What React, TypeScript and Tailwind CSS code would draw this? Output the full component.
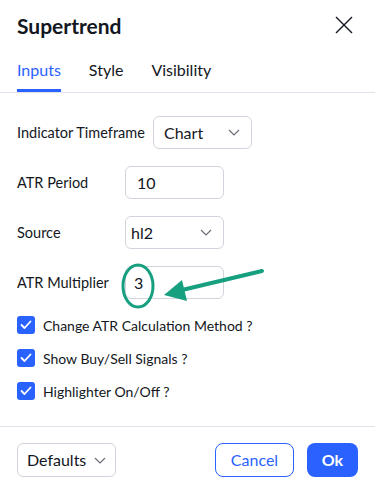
import React from "react";

const Chevron = () => (
  <svg width="12" height="7" viewBox="0 0 12 7" fill="none">
    <path d="M1 1l5 5 5-5" stroke="#6a6d78" strokeWidth="1.2" />
  </svg>
);

const Check = () => (
  <span className="w-[18px] h-[18px] rounded-[3px] bg-[#2962ff] flex items-center justify-center shrink-0">
    <svg width="12" height="10" viewBox="0 0 12 10" fill="none">
      <path d="M1.5 5l3 3 6-6.5" stroke="#fff" strokeWidth="1.8" strokeLinecap="round" strokeLinejoin="round" />
    </svg>
  </span>
);

export default function App() {
  return (
    <div
      className="relative w-[375px] h-[491px] bg-white text-[#131722] overflow-hidden flex flex-col"
      style={{ fontFamily: 'Lato, "Noto Sans", sans-serif' }}
    >
      <div className="h-[48px] flex items-center justify-between pl-[17px] pr-[22px] pt-[2px]">
        <span className="text-[21px] font-bold leading-none">Supertrend</span>
        <svg width="18" height="18" viewBox="0 0 18 18" fill="none">
          <path d="M1 1l16 16M17 1L1 17" stroke="#131722" strokeWidth="1.4" />
        </svg>
      </div>

      <div className="flex gap-[28px] px-[17px] border-b border-[#e0e3eb] h-[45px]">
        <div className="h-[44px] flex items-center border-b-[3px] border-[#2962ff] text-[#2962ff] text-[16px] pt-[3px]">Inputs</div>
        <div className="h-[44px] flex items-center border-b-[3px] border-transparent text-[16px] pt-[3px]">Style</div>
        <div className="h-[44px] flex items-center border-b-[3px] border-transparent text-[16px] pt-[3px]">Visibility</div>
      </div>

      <div className="flex flex-col px-[17px] pt-[23px] text-[14.5px]">
        <div className="flex items-center h-[33px]">
          <span className="w-[136px] shrink-0">Indicator Timeframe</span>
          <div className="w-[99px] h-[33px] border border-[#d1d4dc] rounded-[6px] flex items-center justify-between pl-[10px] pr-[11px] text-[16px]">
            <span>Chart</span>
            <Chevron />
          </div>
        </div>
        <div className="flex items-center h-[33px] mt-[17px]">
          <span className="w-[108px] shrink-0">ATR Period</span>
          <div className="w-[99px] h-[33px] border border-[#d1d4dc] rounded-[6px] flex items-center pl-[11px] text-[16px]">10</div>
        </div>
        <div className="flex items-center h-[33px] mt-[17px]">
          <span className="w-[108px] shrink-0">Source</span>
          <div className="w-[99px] h-[33px] border border-[#d1d4dc] rounded-[6px] flex items-center justify-between pl-[5px] pr-[11px] text-[16px]">
            <span>hl2</span>
            <Chevron />
          </div>
        </div>
        <div className="flex items-center h-[33px] mt-[17px]">
          <span className="w-[108px] shrink-0">ATR Multiplier</span>
          <div className="w-[99px] h-[33px] border border-[#d1d4dc] rounded-[6px] flex items-center pl-[8px] text-[16px]">3</div>
        </div>

        <div className="flex flex-col gap-[15px] mt-[17px] text-[14px]">
          <div className="flex items-center gap-[8px] h-[18px]">
            <Check />
            <span>Change ATR Calculation Method ?</span>
          </div>
          <div className="flex items-center gap-[8px] h-[18px]">
            <Check />
            <span>Show Buy/Sell Signals ?</span>
          </div>
          <div className="flex items-center gap-[8px] h-[18px]">
            <Check />
            <span>Highlighter On/Off ?</span>
          </div>
        </div>
      </div>

      <div className="mt-auto border-t border-[#e0e3eb] h-[65px] flex items-start pt-[16px] px-[17px] justify-between">
        <div className="w-[99px] h-[34px] border border-[#d1d4dc] rounded-[6px] flex items-center justify-between pl-[9px] pr-[9px] text-[16px]">
          <span>Defaults</span>
          <Chevron />
        </div>
        <div className="flex gap-[13px]">
          <div className="w-[79px] h-[34px] border border-[#2962ff] rounded-[8px] flex items-center justify-center text-[#2962ff] text-[16px]">Cancel</div>
          <div className="w-[51px] h-[34px] bg-[#2962ff] rounded-[8px] flex items-center justify-center text-white text-[16px] font-bold">Ok</div>
        </div>
      </div>

      <svg className="absolute left-0 top-0 pointer-events-none" width="375" height="491" viewBox="0 0 375 491">
        <ellipse cx="138" cy="286" rx="15" ry="21" fill="none" stroke="#17a07f" strokeWidth="3" />
        <line x1="262" y1="271" x2="182" y2="290" stroke="#17a07f" strokeWidth="4" strokeLinecap="round" />
        <polygon points="164,295 182,280 187,301" fill="#17a07f" />
      </svg>
    </div>
  );
}
